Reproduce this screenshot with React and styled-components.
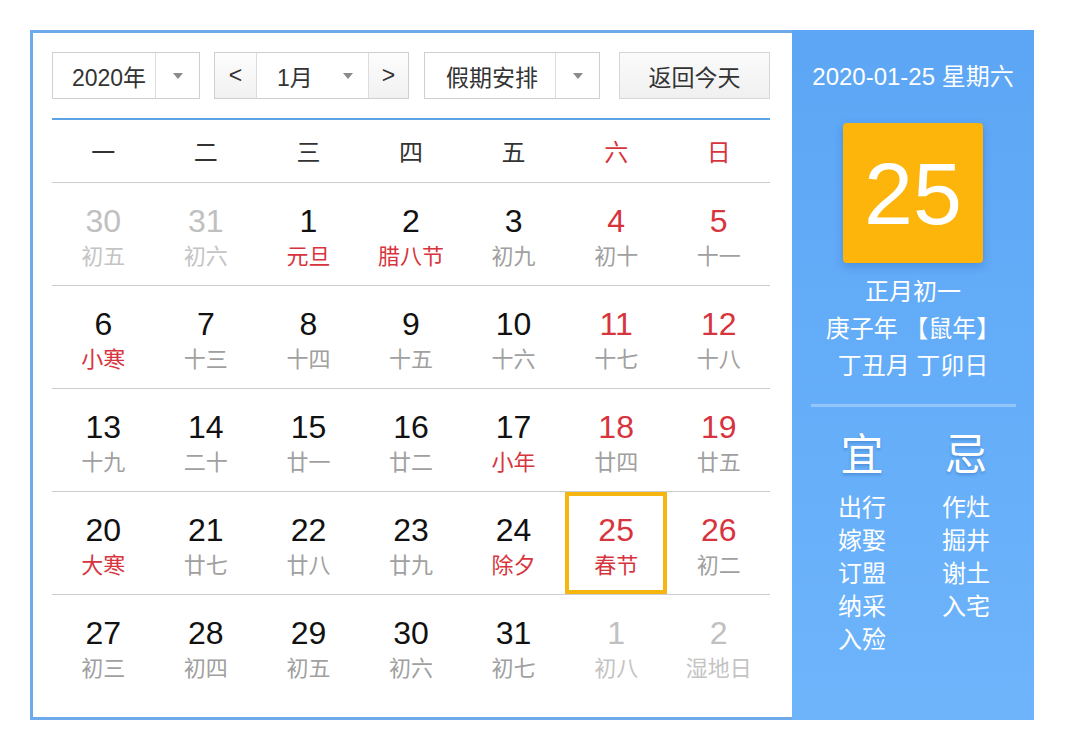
import React from "react";
import styled, { createGlobalStyle, css } from "styled-components";

const GlobalStyle = createGlobalStyle`
  body {
    margin: 0;
    background: #fff;
    font-family: "Liberation Sans", "Noto Sans CJK SC", sans-serif;
  }
`;

const Page = styled.div`
  padding: 30px 0 0 30px;
`;

const Frame = styled.div`
  display: flex;
  width: 1004px;
  height: 690px;
`;

const LeftPane = styled.div`
  width: 762px;
  box-sizing: border-box;
  border: 3px solid #6ea9ec;
  border-right: none;
  padding: 19px 22px 0 19px;
  background: #fff;
`;

const Toolbar = styled.div`
  display: flex;
  height: 47px;
  padding-bottom: 19px;
  border-bottom: 2px solid #5aa4e6;
`;

const Box = styled.div`
  display: flex;
  box-sizing: border-box;
  height: 47px;
  border: 1px solid #cfcfcf;
  margin-right: ${(p) => p.$gap || 0}px;
  font-size: 23px;
  color: #333;
`;

const Part = styled.div`
  display: flex;
  align-items: center;
  justify-content: ${(p) => p.$justify || "center"};
  width: ${(p) => p.$w}px;
  padding-left: ${(p) => p.$pl || 0}px;
  box-sizing: border-box;
  border-left: ${(p) => (p.$divider ? "1px solid #dcdcdc" : "none")};
  background: ${(p) => (p.$shade ? "linear-gradient(#fdfdfd, #f1f1f1)" : "#fff")};
`;

const Arrow = styled.span`
  width: 0;
  height: 0;
  border-left: 5px solid transparent;
  border-right: 5px solid transparent;
  border-top: 6px solid #8a8a8a;
  margin-left: ${(p) => p.$ml || 0}px;
`;

const TodayButton = styled(Box)`
  width: 151px;
  align-items: center;
  justify-content: center;
  background: linear-gradient(#fbfbfb, #f0f0f0);
  border-color: #d6d6d6;
`;

const Grid = styled.div`
  display: grid;
  grid-template-columns: repeat(7, 1fr);
`;

const HeadCell = styled.div`
  height: 63px;
  display: flex;
  align-items: center;
  justify-content: center;
  padding-bottom: 2px;
  box-sizing: border-box;
  font-size: 24px;
  color: ${(p) => (p.$weekend ? "#d7343d" : "#333")};
  border-bottom: 1px solid #cccccc;
`;

const DayCell = styled.div`
  height: 103px;
  box-sizing: border-box;
  display: flex;
  flex-direction: column;
  align-items: center;
  padding-top: 20px;
  border-bottom: ${(p) => (p.$last ? "none" : "1px solid #cccccc")};
  ${(p) =>
    p.$selected &&
    css`
      box-shadow: inset 0 0 0 4px #f5b612;
    `}
`;

const DayNum = styled.div`
  font-size: 32px;
  line-height: 36px;
  color: ${(p) => (p.$muted ? "#c0c0c0" : p.$red ? "#d7343d" : "#111")};
`;

const Lunar = styled.div`
  font-size: 22px;
  line-height: 36px;
  color: ${(p) => (p.$muted ? "#c4c4c4" : p.$red ? "#d7343d" : "#a0a0a0")};
`;

const RightPane = styled.div`
  width: 242px;
  background: linear-gradient(#5ca6f5, #6db4fb);
  color: #fff;
  display: flex;
  flex-direction: column;
  align-items: center;
  padding-top: 33px;
  box-sizing: border-box;
`;

const DateLine = styled.div`
  font-size: 24px;
  line-height: 28px;
  white-space: nowrap;
`;

const BigDay = styled.div`
  margin-top: 32px;
  width: 140px;
  height: 140px;
  border-radius: 4px;
  background: #fdb50b;
  box-shadow: 0 3px 8px rgba(0, 60, 140, 0.25);
  display: flex;
  align-items: center;
  justify-content: center;
  font-size: 88px;
  padding-top: 2px;
  box-sizing: border-box;
`;

const LunarInfo = styled.div`
  margin-top: 10px;
  font-size: 24px;
  line-height: 37px;
  text-align: center;
  white-space: nowrap;
`;

const Divider = styled.div`
  width: 205px;
  height: 3px;
  margin-top: 20px;
  background: rgba(255, 255, 255, 0.3);
`;

const Advice = styled.div`
  display: grid;
  grid-template-columns: 104px 60px;
  margin-top: 20px;
  padding-left: 46px;
  width: 100%;
  box-sizing: border-box;
`;

const AdviceCol = styled.div`
  display: flex;
  flex-direction: column;
  align-items: flex-start;
`;

const AdviceHead = styled.div`
  width: 48px;
  text-align: center;
  font-size: 43px;
  line-height: 56px;
  margin-bottom: 8px;
  text-shadow: 0 2px 3px rgba(0, 50, 120, 0.25);
`;

const AdviceItem = styled.div`
  font-size: 24px;
  line-height: 33px;
`;

const weekdays = ["一", "二", "三", "四", "五", "六", "日"];

const days = [
  [30, "初五", 1], [31, "初六", 1], [1, "元旦", 0, 1], [2, "腊八节", 0, 1], [3, "初九"], [4, "初十"], [5, "十一"],
  [6, "小寒", 0, 1], [7, "十三"], [8, "十四"], [9, "十五"], [10, "十六"], [11, "十七"], [12, "十八"],
  [13, "十九"], [14, "二十"], [15, "廿一"], [16, "廿二"], [17, "小年", 0, 1], [18, "廿四"], [19, "廿五"],
  [20, "大寒", 0, 1], [21, "廿七"], [22, "廿八"], [23, "廿九"], [24, "除夕", 0, 1], [25, "春节", 0, 1], [26, "初二"],
  [27, "初三"], [28, "初四"], [29, "初五"], [30, "初六"], [31, "初七"], [1, "初八", 1], [2, "湿地日", 1],
];

const good = ["出行", "嫁娶", "订盟", "纳采", "入殓"];
const bad = ["作灶", "掘井", "谢土", "入宅"];

export default function App() {
  return (
    <Page>
      <GlobalStyle />
      <Frame>
        <LeftPane>
          <Toolbar>
            <Box $gap={14}>
              <Part $w={102} $pl={10}>2020年</Part>
              <Part $w={44} $divider>
                <Arrow />
              </Part>
            </Box>
            <Box $gap={15}>
              <Part $w={41} $shade>&lt;</Part>
              <Part $w={112} $divider $justify="flex-start" $pl={20}>
                1月
                <Arrow $ml={30} />
              </Part>
              <Part $w={40} $shade $divider>&gt;</Part>
            </Box>
            <Box $gap={19}>
              <Part $w={130} $pl={4}>假期安排</Part>
              <Part $w={44} $divider>
                <Arrow />
              </Part>
            </Box>
            <TodayButton>返回今天</TodayButton>
          </Toolbar>
          <Grid>
            {weekdays.map((w, i) => (
              <HeadCell key={w} $weekend={i >= 5}>
                {w}
              </HeadCell>
            ))}
            {days.map(([n, l, muted, holiday], i) => {
              const weekend = i % 7 >= 5;
              return (
                <DayCell key={i} $last={i >= 28} $selected={i === 26}>
                  <DayNum $muted={muted} $red={weekend}>
                    {n}
                  </DayNum>
                  <Lunar $muted={muted} $red={holiday}>
                    {l}
                  </Lunar>
                </DayCell>
              );
            })}
          </Grid>
        </LeftPane>
        <RightPane>
          <DateLine>2020-01-25 星期六</DateLine>
          <BigDay>25</BigDay>
          <LunarInfo>
            <div>正月初一</div>
            <div>庚子年 【鼠年】</div>
            <div>丁丑月 丁卯日</div>
          </LunarInfo>
          <Divider />
          <Advice>
            <AdviceCol>
              <AdviceHead>宜</AdviceHead>
              {good.map((g) => (
                <AdviceItem key={g}>{g}</AdviceItem>
              ))}
            </AdviceCol>
            <AdviceCol>
              <AdviceHead>忌</AdviceHead>
              {bad.map((g) => (
                <AdviceItem key={g}>{g}</AdviceItem>
              ))}
            </AdviceCol>
          </Advice>
        </RightPane>
      </Frame>
    </Page>
  );
}
